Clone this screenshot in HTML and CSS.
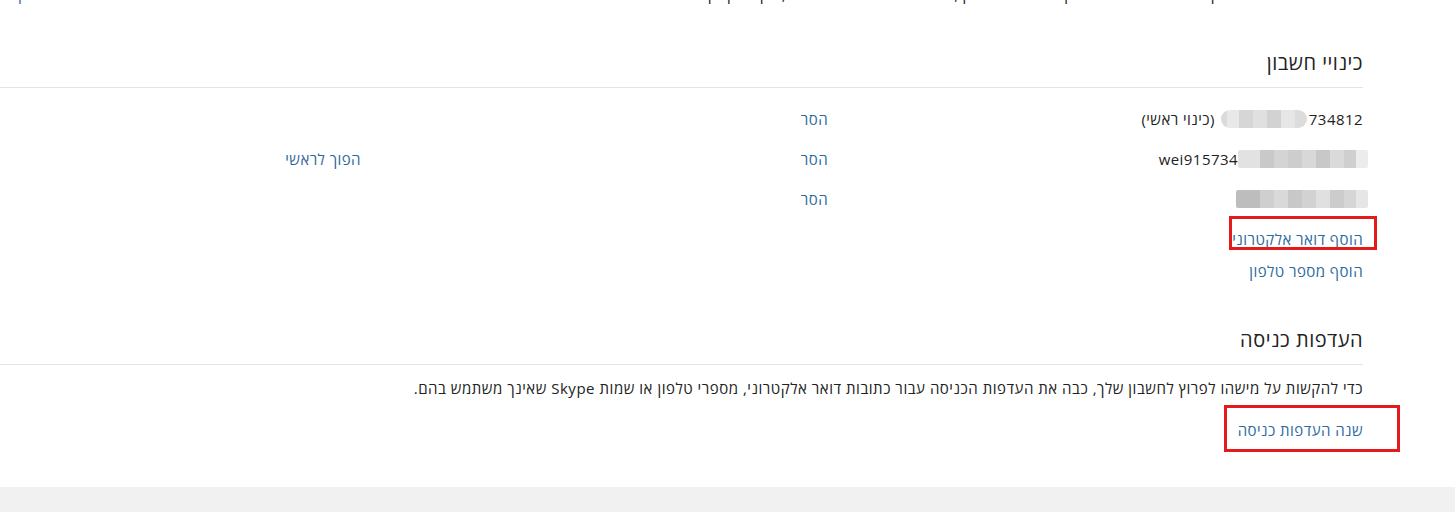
FILE: index.html
```html
<!DOCTYPE html>
<html lang="he" dir="rtl">
<head>
    <meta charset="UTF-8" />
    <meta name="viewport" content="width=device-width, initial-scale=1.0" />
    <title>פרטי החשבון שלך</title>
    <link rel="stylesheet" href="styles.css">
</head>
<body>
    <div id="topCut">
        <div class="top-line">
            <span class="top-text">נהל את האופן שבו אתה נכנס לחשבון Microsoft שלך, כולל כינויים ופרטי אבטחה, בקר בדף ק</span>
            <a href="#" class="top-link">ק</a>
        </div>
    </div>

    <div id="page">
        <section class="block">
            <h2 class="block-title">כינויי חשבון</h2>

            <div class="alias-list">
                <div class="alias-row">
                    <div class="alias-name">
                        <span>734812</span>
                        <span class="blur blur-a"></span>
                        <span class="alias-note">(כינוי ראשי)</span>
                    </div>
                    <div class="alias-action"><a href="#">הסר</a></div>
                    <div class="alias-action"></div>
                </div>
                <div class="alias-row">
                    <div class="alias-name">
                        <span class="blur blur-b"></span>
                        <span>wei915734</span>
                    </div>
                    <div class="alias-action"><a href="#">הסר</a></div>
                    <div class="alias-action"><a href="#">הפוך לראשי</a></div>
                </div>
                <div class="alias-row">
                    <div class="alias-name">
                        <span class="blur blur-c"></span>
                    </div>
                    <div class="alias-action"><a href="#">הסר</a></div>
                    <div class="alias-action"></div>
                </div>
            </div>

            <div class="add-links">
                <a href="#" class="marked mark-email">הוסף דואר אלקטרוני</a>
                <a href="#">הוסף מספר טלפון</a>
            </div>
        </section>

        <section class="block second">
            <h2 class="block-title">העדפות כניסה</h2>
            <p class="block-text">כדי להקשות על מישהו לפרוץ לחשבון שלך, כבה את העדפות הכניסה עבור כתובות דואר אלקטרוני, מספרי טלפון או שמות Skype שאינך משתמש בהם.</p>
            <div class="pref-link">
                <a href="#" class="marked mark-pref">שנה העדפות כניסה</a>
            </div>
        </section>
    </div>

    <div id="footer"></div>
</body>
</html>
```

FILE: styles.css
```css
body {
  margin: 0;
  background-color: #fff;
  font-family: "Open Sans", "Liberation Sans", "DejaVu Sans", sans-serif;
  font-size: 15px;
  letter-spacing: 0.45px;
  color: #222;
}

a {
  color: #2c6aa0;
  text-decoration: none;
}

#topCut {
  height: 5px;
  overflow: hidden;
}

.top-line {
  display: flex;
  justify-content: space-between;
  line-height: 20px;
  margin-top: -16px;
  padding: 0 155px 0 0;
}

.top-link {
  margin-left: 18px;
}

#page {
  padding: 0 92px 0 0;
}

.block-title {
  margin: 44px 0 0;
  padding-bottom: 10px;
  border-bottom: 1px solid #e3e3e3;
  font-size: 20px;
  font-weight: 400;
  letter-spacing: 0.5px;
  line-height: 28px;
  color: #222;
}

.alias-list {
  padding-top: 11px;
}

.alias-row {
  display: flex;
  height: 40px;
  align-items: center;
}

.alias-name {
  display: flex;
  align-items: center;
  width: 535px;
  flex-shrink: 0;
}

.alias-note {
  margin-right: 6px;
}

.alias-action {
  width: 467px;
  flex-shrink: 0;
}

.blur {
  display: inline-block;
  height: 18px;
  border-radius: 2px;
}

.blur-a {
  width: 86px;
  margin-right: 2px;
  border-radius: 9px;
  background: linear-gradient(to left, #dcdcdc 0 12px, #e6e6e6 12px 26px, #d2d2d2 26px 40px, #e0e0e0 40px 54px, #d6d6d6 54px 68px, #e8e8e8 68px 80px, #dadada 80px);
}

.blur-b {
  width: 130px;
  margin-right: -5px;
  background: linear-gradient(to left, #ececec 0 12px, #cfcfcf 12px 24px, #dadada 24px 38px, #c8c8c8 38px 52px, #d8d8d8 52px 66px, #cdcdcd 66px 80px, #d4d4d4 80px 94px, #c9c9c9 94px 108px, #e2e2e2 108px);
}

.blur-c {
  width: 132px;
  margin-right: -5px;
  background: linear-gradient(to left, #e6e6e6 0 12px, #d6d6d6 12px 24px, #cccccc 24px 38px, #e0e0e0 38px 52px, #d2d2d2 52px 66px, #c8c8c8 66px 80px, #d9d9d9 80px 94px, #cfcfcf 94px 108px, #bdbdbd 108px);
}

.add-links {
  display: flex;
  flex-direction: column;
  align-items: flex-start;
  gap: 12px;
  margin-top: 10px;
  line-height: 20px;
}

.marked {
  position: relative;
}

.marked::after {
  content: "";
  position: absolute;
  box-sizing: border-box;
  border: 3px solid #e31b1b;
}

.mark-email::after {
  right: -14px;
  top: -13px;
  width: 148px;
  height: 34px;
}

.second .block-title {
  margin-top: 45px;
}

.block-text {
  margin: 13px 0 0;
  line-height: 20px;
  letter-spacing: 0.53px;
}

.pref-link {
  margin-top: 22px;
  line-height: 20px;
}

.mark-pref::after {
  right: -37px;
  top: -15px;
  width: 176px;
  height: 47px;
}

#footer {
  margin-top: 47px;
  height: 40px;
  background-color: #f1f1f1;
}
```
